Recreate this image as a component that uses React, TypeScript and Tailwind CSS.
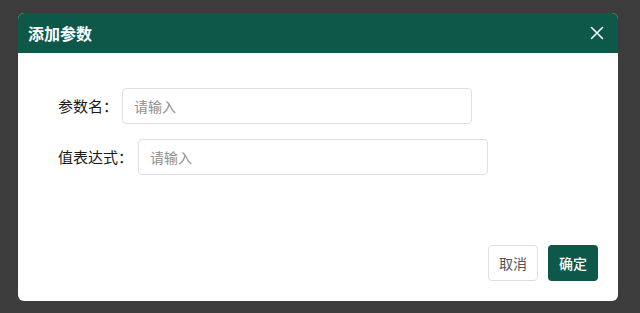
import React from "react";

export default function App() {
  return (
    <div
      className="w-[640px] h-[313px] bg-[#3c3c3c] pt-[13px] pl-[18px]"
      style={{ fontFamily: '"Noto Sans CJK SC", "Noto Sans", sans-serif' }}
    >
      <div className="w-[600px] h-[288px] bg-white rounded-[6px] overflow-hidden flex flex-col">
        <div className="h-[40px] bg-[#0e584a] flex items-center justify-between pl-[10px] pr-[14px]">
          <span className="text-white text-[16px] font-semibold leading-none">添加参数</span>
          <svg width="14" height="14" viewBox="0 0 14 14" className="text-white">
            <path d="M1.5 1.5 L12.5 12.5 M12.5 1.5 L1.5 12.5" stroke="currentColor" strokeWidth="1.6" strokeLinecap="round" />
          </svg>
        </div>
        <div className="flex-1 flex flex-col pl-[40px] pt-[35px] gap-[15px]">
          <div className="flex items-center">
            <span className="text-[15px] text-[#1a1a1a] mr-[4px]">参数名：</span>
            <div className="w-[350px] h-[36px] border border-[#dcdfe6] rounded-[4px] flex items-center pl-[11px]">
              <span className="text-[14px] text-[#8f8f8f]">请输入</span>
            </div>
          </div>
          <div className="flex items-center">
            <span className="text-[15px] text-[#1a1a1a] mr-[5px]">值表达式：</span>
            <div className="w-[350px] h-[36px] border border-[#dcdfe6] rounded-[4px] flex items-center pl-[11px]">
              <span className="text-[14px] text-[#8f8f8f]">请输入</span>
            </div>
          </div>
        </div>
        <div className="flex justify-end gap-[10px] pr-[20px] pb-[20px]">
          <div className="w-[50px] h-[36px] border border-[#dcdfe6] rounded-[4px] flex items-center justify-center text-[14px] text-[#555]">
            取消
          </div>
          <div className="w-[50px] h-[36px] bg-[#0e584a] rounded-[4px] flex items-center justify-center text-[14px] text-white font-medium">
            确定
          </div>
        </div>
      </div>
    </div>
  );
}
